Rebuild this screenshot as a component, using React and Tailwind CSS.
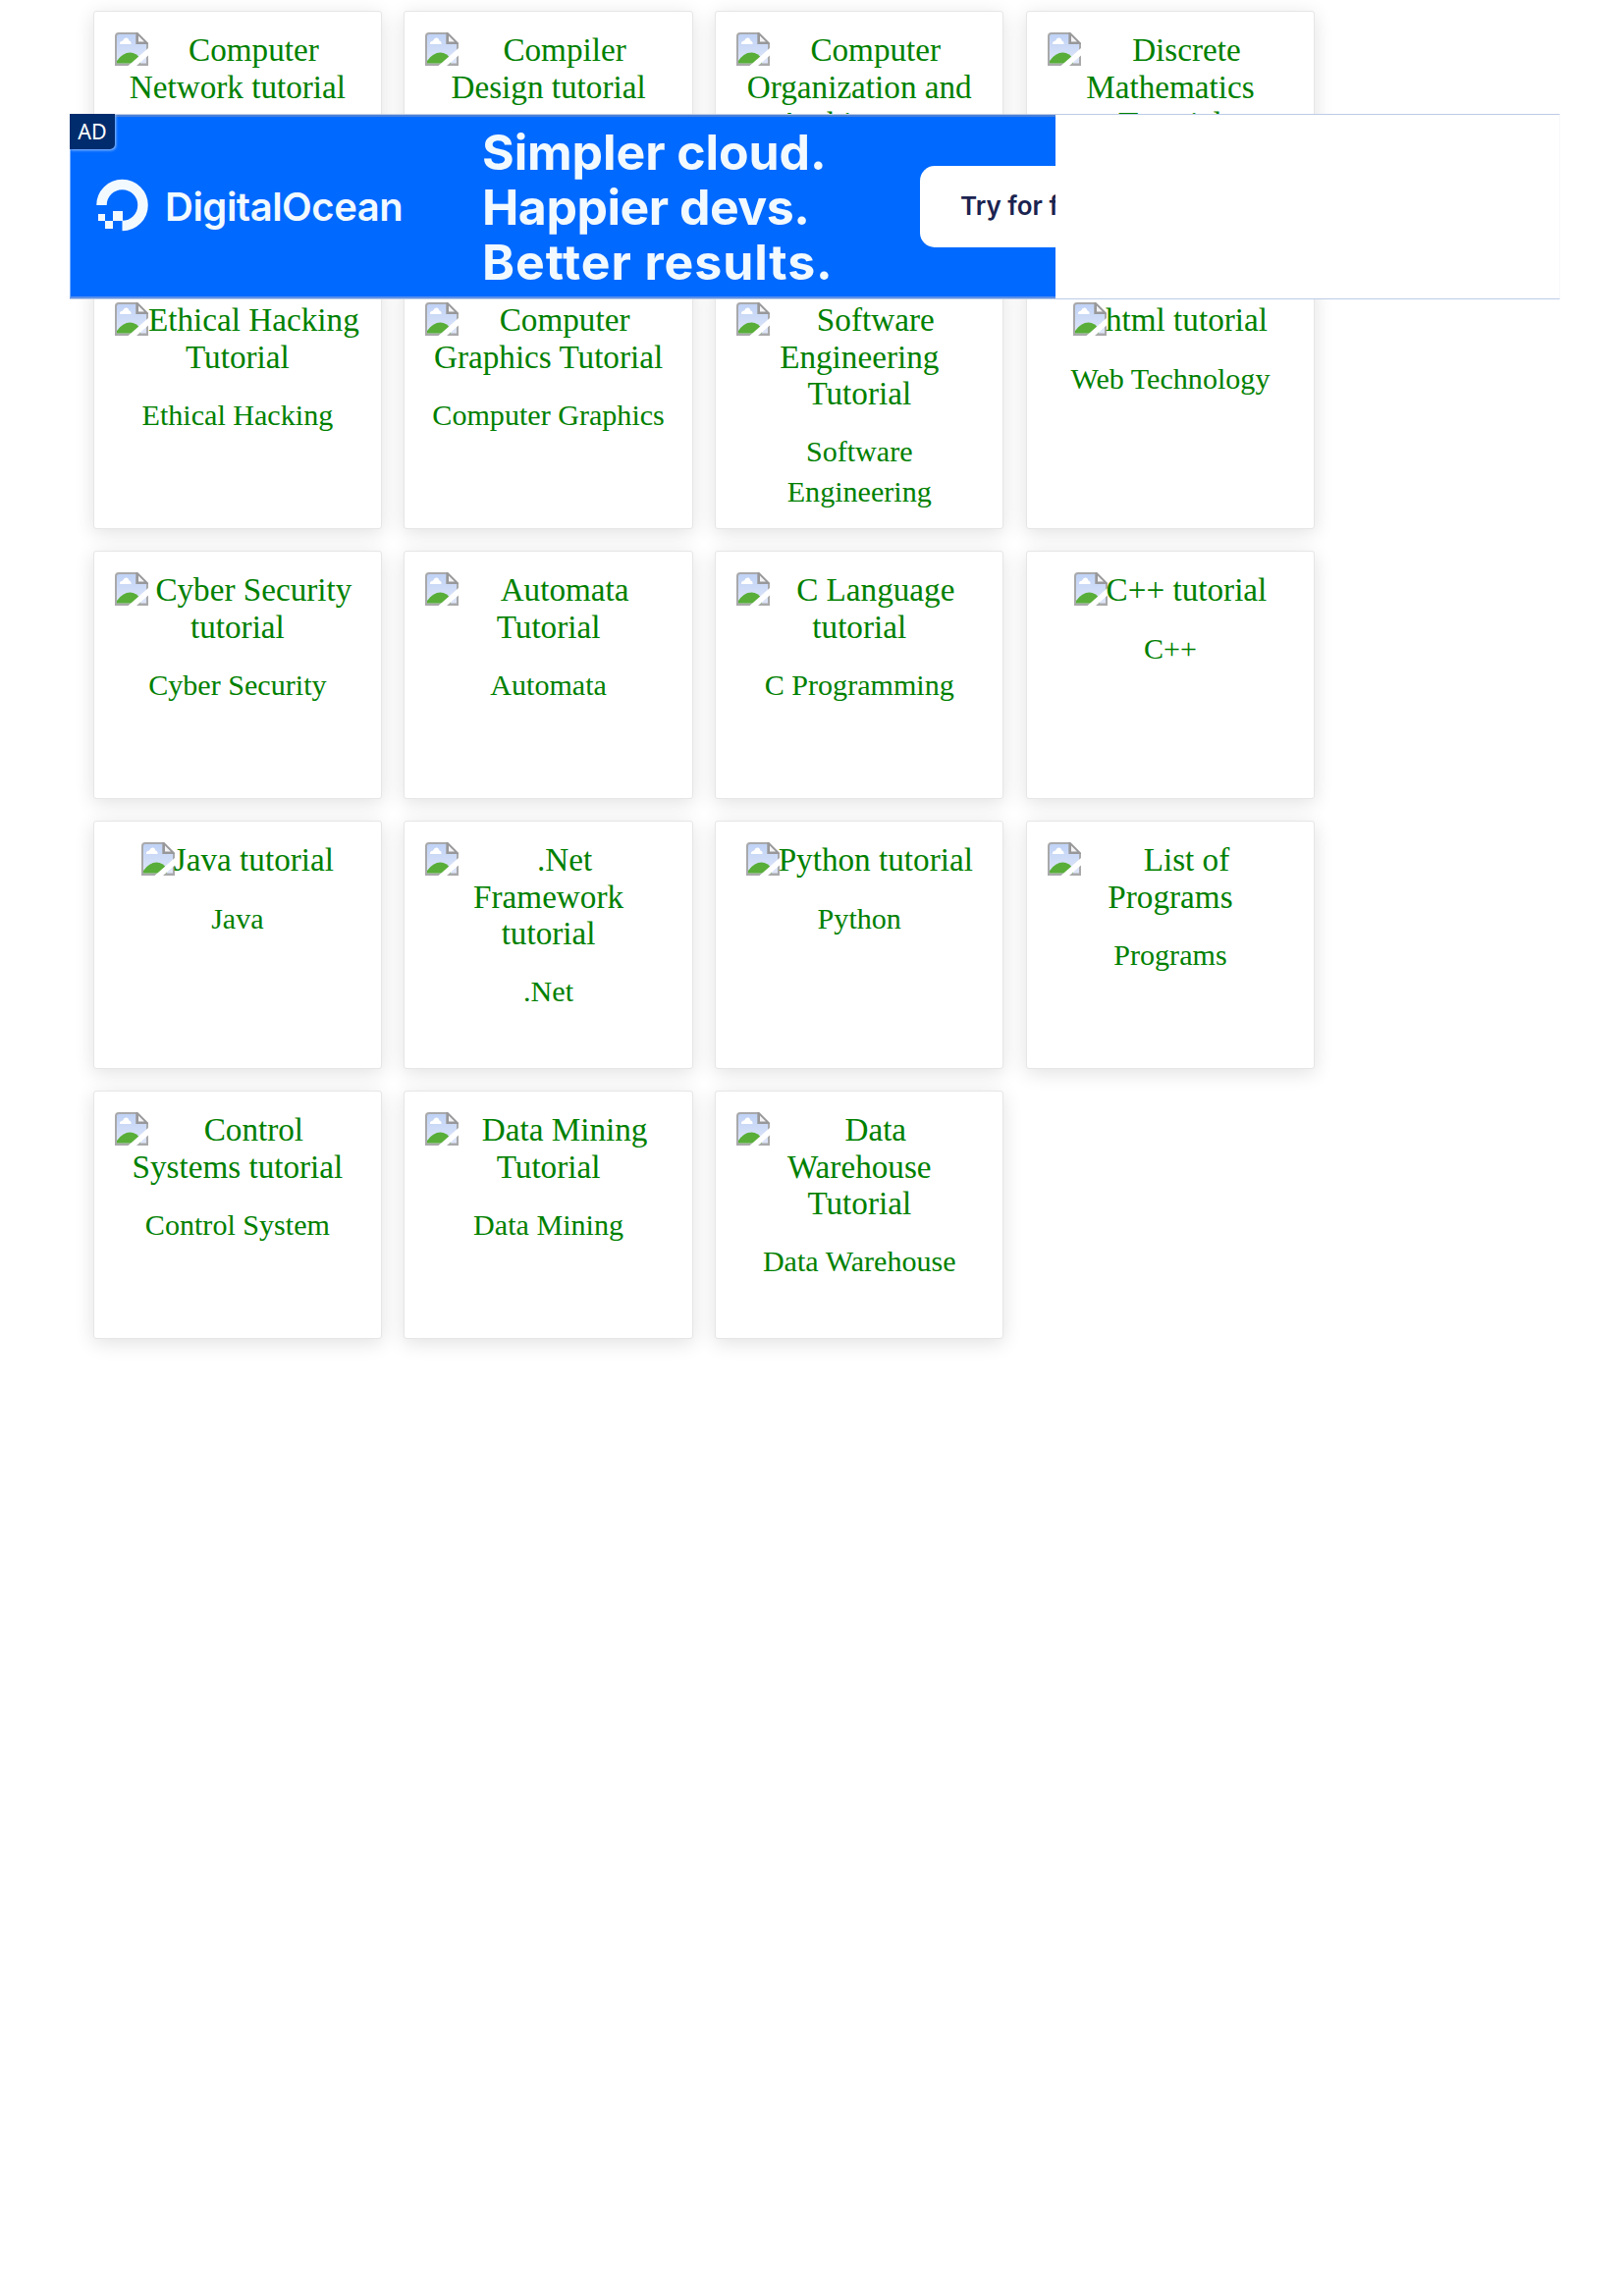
const rows = [
  [
    { alt: ["Computer", "Network tutorial"], label: [] },
    { alt: ["Compiler", "Design tutorial"], label: [] },
    { alt: ["Computer", "Organization and", "Architecture"], label: [] },
    { alt: ["Discrete", "Mathematics", "Tutorial"], label: [] },
  ],
  [
    { alt: ["Ethical Hacking", "Tutorial"], label: ["Ethical Hacking"] },
    { alt: ["Computer", "Graphics Tutorial"], label: ["Computer Graphics"] },
    { alt: ["Software", "Engineering", "Tutorial"], label: ["Software", "Engineering"] },
    { alt: ["html tutorial"], label: ["Web Technology"] },
  ],
  [
    { alt: ["Cyber Security", "tutorial"], label: ["Cyber Security"] },
    { alt: ["Automata", "Tutorial"], label: ["Automata"] },
    { alt: ["C Language", "tutorial"], label: ["C Programming"] },
    { alt: ["C++ tutorial"], label: ["C++"] },
  ],
  [
    { alt: ["Java tutorial"], label: ["Java"] },
    { alt: [".Net", "Framework", "tutorial"], label: [".Net"] },
    { alt: ["Python tutorial"], label: ["Python"] },
    { alt: ["List of", "Programs"], label: ["Programs"] },
  ],
  [
    { alt: ["Control", "Systems tutorial"], label: ["Control System"] },
    { alt: ["Data Mining", "Tutorial"], label: ["Data Mining"] },
    { alt: ["Data", "Warehouse", "Tutorial"], label: ["Data Warehouse"] },
  ],
];

function BrokenImage() {
  return (
    <svg className="mt-[0.500px] ml-[0.500px] h-[34px] w-[34px] shrink-0" viewBox="0 0 34 34">
      <defs>
        <linearGradient id="sky" x1="0" y1="0" x2="0" y2="1">
          <stop offset="0" stopColor="#bfd2f6" />
          <stop offset="1" stopColor="#dfe6f8" />
        </linearGradient>
      </defs>
      <path d="M4 0H23L34 11V34H0V4Q0 0 4 0Z" fill="#a9a9ab" />
      <path d="M4 2H21.500V12H32V31.500H2V4Q2 2 4 2Z" fill="url(#sky)" />
      <path d="M5 12Q4.500 9 8 8.500Q9.500 5 12 5.500Q14 6 14.500 8.500Q17 9 16.500 12Z" fill="#fff" />
      <path d="M2 31.500V29Q8 20.500 15.500 20.500Q22 20.500 26 27V31.500Z" fill="#58ae38" />
      <path d="M21.500 0H23L34 11V12H21.500Z" fill="#98989a" />
      <path d="M24 3.500L30 9.500H24Z" fill="#f4f4f6" />
      <path d="M34 16V23.500L22 34H13.500Z" fill="#fff" />
    </svg>
  );
}

function Card({ alt, label }) {
  const single = alt.length === 1;
  return (
    <div className="h-[252.500px] w-[294.200px] rounded-[3px] border-[1.500px] border-[#e6e6e6] bg-white px-[20.500px] pt-[20px] text-center whitespace-nowrap text-[#008000] shadow-[0_4px_20px_rgba(0,0,0,0.12)]">
      <div className="flex h-[37.600px] justify-center text-[33.200px] leading-[37.600px]">
        <BrokenImage />
        <span className={single ? "-ml-[1.500px]" : "-ml-[1.500px] flex-1"}>{alt[0]}</span>
      </div>
      {alt.slice(1).map((line, i) => (
        <div key={line} className={i === 1 ? "-mt-px mb-px h-[37.600px] text-[33.200px] leading-[37.600px]" : "h-[37.600px] text-[33.200px] leading-[37.600px]"}>{line}</div>
      ))}
      <div className="mt-[20.800px] text-[30.100px] leading-[41px]">
        {label.map((line) => <div key={line}>{line}</div>)}
      </div>
    </div>
  );
}

function OceanLogo() {
  return (
    <svg className="h-[54px] w-[54px]" viewBox="0 0 54 54">
      <path d="M5.500 27A21 21 0 1 1 26.500 48" fill="none" stroke="#f2faff" strokeWidth="10.500" />
      <path d="M17 33H27V43H17ZM9 43H17V51H9ZM2 36H9V43H2Z" fill="#f2faff" />
    </svg>
  );
}

function Ad() {
  return (
    <div className="absolute top-[116px] left-[71px] flex h-[189px] w-[1518px] border-y border-[#bccbe6] border-r border-r-[#f8f8fb] bg-white">
      <div className="flex h-full w-[1004px] items-start overflow-hidden border-y-2 border-l border-l-[#7aaef8] border-t-[#4a80d8] border-b-[#5b90ea] bg-[#0069ff] font-['Inter'] whitespace-nowrap text-[#f2faff]">
        <div className="mt-[63px] ml-[26px] shrink-0"><OceanLogo /></div>
        <div className="mt-[67px] ml-[16px] w-[323px] shrink-0 text-[40px] leading-[50px] font-semibold tracking-[-0.500px]">DigitalOcean</div>
        <div className="mt-[8px] w-[446px] shrink-0 text-[50px] leading-[56px] font-bold">
          <div className="tracking-[-0.100px]">Simpler cloud.</div>
          <div className="tracking-[-0.500px]">Happier devs.</div>
          <div className="tracking-[0.900px]">Better results.</div>
        </div>
        <div className="mt-[50px] h-[83px] w-[238px] shrink-0 rounded-[15px] bg-white pl-[41px] text-[26px] leading-[81px] font-semibold text-[#1b2350]">Try for free</div>
      </div>
      <div className="absolute top-[-1px] left-0 flex h-[36px] w-[46px] items-center justify-center rounded-br-[5px] bg-[#002c6d] font-['Noto_Sans'] text-[21.500px] text-white shadow-[1px_1px_3px_rgba(255,255,255,0.6)]">AD</div>
    </div>
  );
}

export default function App() {
  return (
    <div className="relative h-[2339px] w-[1653px] overflow-hidden bg-white font-['Liberation_Serif',serif]">
      <div className="flex flex-col gap-[22.500px] pt-[11.400px] pl-[94.800px]">
        {rows.map((row, i) => (
          <div key={i} className="flex gap-[22.500px]">
            {row.map((c) => <Card key={c.alt.join(" ")} {...c} />)}
          </div>
        ))}
      </div>
      <Ad />
    </div>
  );
}
